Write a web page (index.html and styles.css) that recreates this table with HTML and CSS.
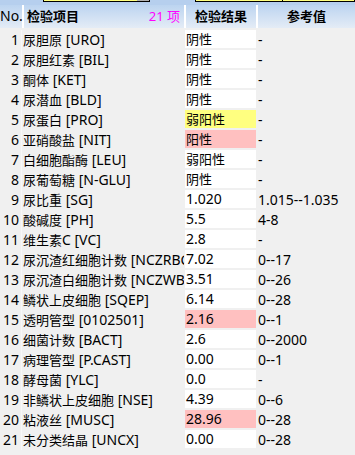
FILE: index.html
```html
<!DOCTYPE html>
<html lang="zh">
<head>
<meta charset="utf-8">
<title>检验结果</title>
<link rel="stylesheet" href="styles.css">
</head>
<body>
<div class="grid">
  <div class="head">
    <div class="strip">
      <div class="tab tab1"><div class="tab-gray"></div></div>
      <div class="tab tab2"><div class="tab-tick"></div></div>
    </div>
    <div class="head-row">
      <div class="h no">No.</div>
      <div class="h item"><span class="bold">检验项目</span><span class="count">21 项</span></div>
      <div class="h res bold">检验结果</div>
      <div class="h ref bold">参考值</div>
    </div>
  </div>
  <div class="row"><div class="no">1</div><div class="item"><span class="name">尿胆原</span> <span class="code">[URO]</span></div><div class="res zh">阴性</div><div class="ref">-</div></div>
  <div class="row"><div class="no">2</div><div class="item"><span class="name">尿胆红素</span> <span class="code">[BIL]</span></div><div class="res zh">阴性</div><div class="ref">-</div></div>
  <div class="row"><div class="no">3</div><div class="item"><span class="name">酮体</span> <span class="code">[KET]</span></div><div class="res zh">阴性</div><div class="ref">-</div></div>
  <div class="row"><div class="no">4</div><div class="item"><span class="name">尿潜血</span> <span class="code">[BLD]</span></div><div class="res zh">阴性</div><div class="ref">-</div></div>
  <div class="row"><div class="no">5</div><div class="item"><span class="name">尿蛋白</span> <span class="code">[PRO]</span></div><div class="res zh warn">弱阳性</div><div class="ref">-</div></div>
  <div class="row"><div class="no">6</div><div class="item"><span class="name">亚硝酸盐</span> <span class="code">[NIT]</span></div><div class="res zh alert">阳性</div><div class="ref">-</div></div>
  <div class="row"><div class="no">7</div><div class="item"><span class="name">白细胞酯酶</span> <span class="code">[LEU]</span></div><div class="res zh">弱阳性</div><div class="ref">-</div></div>
  <div class="row"><div class="no">8</div><div class="item"><span class="name">尿葡萄糖</span> <span class="code">[N-GLU]</span></div><div class="res zh">阴性</div><div class="ref">-</div></div>
  <div class="row"><div class="no">9</div><div class="item"><span class="name">尿比重</span> <span class="code">[SG]</span></div><div class="res">1.020</div><div class="ref">1.015--1.035</div></div>
  <div class="row"><div class="no">10</div><div class="item"><span class="name">酸碱度</span> <span class="code">[PH]</span></div><div class="res">5.5</div><div class="ref">4-8</div></div>
  <div class="row"><div class="no">11</div><div class="item"><span class="name">维生素</span><span class="code">C</span> <span class="code">[VC]</span></div><div class="res">2.8</div><div class="ref">-</div></div>
  <div class="row"><div class="no">12</div><div class="item"><span class="name">尿沉渣红细胞计数</span> <span class="code">[NCZRBC]</span></div><div class="res">7.02</div><div class="ref">0--17</div></div>
  <div class="row"><div class="no">13</div><div class="item"><span class="name">尿沉渣白细胞计数</span> <span class="code">[NCZWBC]</span></div><div class="res">3.51</div><div class="ref">0--26</div></div>
  <div class="row"><div class="no">14</div><div class="item"><span class="name">鳞状上皮细胞</span> <span class="code">[SQEP]</span></div><div class="res">6.14</div><div class="ref">0--28</div></div>
  <div class="row"><div class="no">15</div><div class="item"><span class="name">透明管型</span> <span class="code">[0102501]</span></div><div class="res alert">2.16</div><div class="ref">0--1</div></div>
  <div class="row"><div class="no">16</div><div class="item"><span class="name">细菌计数</span> <span class="code">[BACT]</span></div><div class="res">2.6</div><div class="ref">0--2000</div></div>
  <div class="row"><div class="no">17</div><div class="item"><span class="name">病理管型</span> <span class="code">[P.CAST]</span></div><div class="res">0.00</div><div class="ref">0--1</div></div>
  <div class="row"><div class="no">18</div><div class="item"><span class="name">酵母菌</span> <span class="code">[YLC]</span></div><div class="res">0.0</div><div class="ref">-</div></div>
  <div class="row"><div class="no">19</div><div class="item"><span class="name">非鳞状上皮细胞</span> <span class="code">[NSE]</span></div><div class="res">4.39</div><div class="ref">0--6</div></div>
  <div class="row"><div class="no">20</div><div class="item"><span class="name">粘液丝</span> <span class="code">[MUSC]</span></div><div class="res alert">28.96</div><div class="ref">0--28</div></div>
  <div class="row"><div class="no">21</div><div class="item"><span class="name">未分类结晶</span> <span class="code">[UNCX]</span></div><div class="res">0.00</div><div class="ref">0--28</div></div>
</div>
</body>
</html>
```

FILE: styles.css
```css
html, body {
  margin: 0;
  padding: 0;
  background: #f0f0f0;
}
body {
  font-family: "Noto Sans", "Noto Sans CJK SC", sans-serif;
  font-size: 14px;
  color: #000;
  width: 355px;
  height: 455px;
  overflow: hidden;
}
.grid {
  display: flex;
  flex-direction: column;
}
.head {
  height: 30px;
  display: flex;
  flex-direction: column;
}
.strip {
  height: 5px;
  display: flex;
  background: #b6cfee;
}
.tab {
  height: 1px;
  background: #ffff80;
  border: 1px solid #000;
  border-top: 0;
  display: flex;
  justify-content: flex-end;
}
.tab1 {
  margin-left: 43px;
  width: 105px;
}
.tab-gray {
  width: 12px;
  background: #b0b0b0;
}
.tab2 {
  margin-left: 45px;
  flex: 1;
  justify-content: flex-start;
}
.tab-tick {
  margin-left: 86px;
  width: 1px;
  background: #000;
}
.head-row {
  height: 23px;
  display: flex;
  background: linear-gradient(#bcd4f0, #e4ecf6);
}
.h {
  line-height: 22px;
  border-right: 2px solid #fff;
  box-sizing: border-box;
  white-space: nowrap;
}
.h.no {
  width: 24px;
  padding-left: 0;
}
.h.item {
  width: 162px;
  display: flex;
  justify-content: space-between;
  padding: 0 4px 0 3px;
}
.h.res {
  width: 72px;
  text-align: center;
}
.h.ref {
  flex: 1;
  text-align: center;
  border-right: 0;
}
.bold {
  font-weight: bold;
  font-size: 13px;
}
.count {
  color: #ff00ff;
  font-size: 13px;
}
.row {
  height: 20px;
  display: flex;
  line-height: 19px;
}
.row .no {
  width: 22px;
  box-sizing: border-box;
  text-align: right;
  padding-right: 2px;
  border-right: 1px solid #f8f8f8;
}
.row .item {
  width: 162px;
  padding-left: 1px;
  box-sizing: border-box;
  white-space: nowrap;
  overflow: hidden;
}
.name {
  font-size: 13px;
}
.row .res {
  width: 71px;
  height: 18px;
  margin: 0 1px 0 1px;
  padding-left: 1px;
  box-sizing: border-box;
  background: #fff;
  line-height: 18px;
  white-space: nowrap;
  overflow: hidden;
}
.row .res.zh {
  font-size: 13px;
}
.row .res.warn {
  background: #ffff80;
}
.row .res.alert {
  background: #ffc0c0;
}
.row .ref {
  flex: 1;
  padding-left: 1px;
  white-space: nowrap;
}
```
